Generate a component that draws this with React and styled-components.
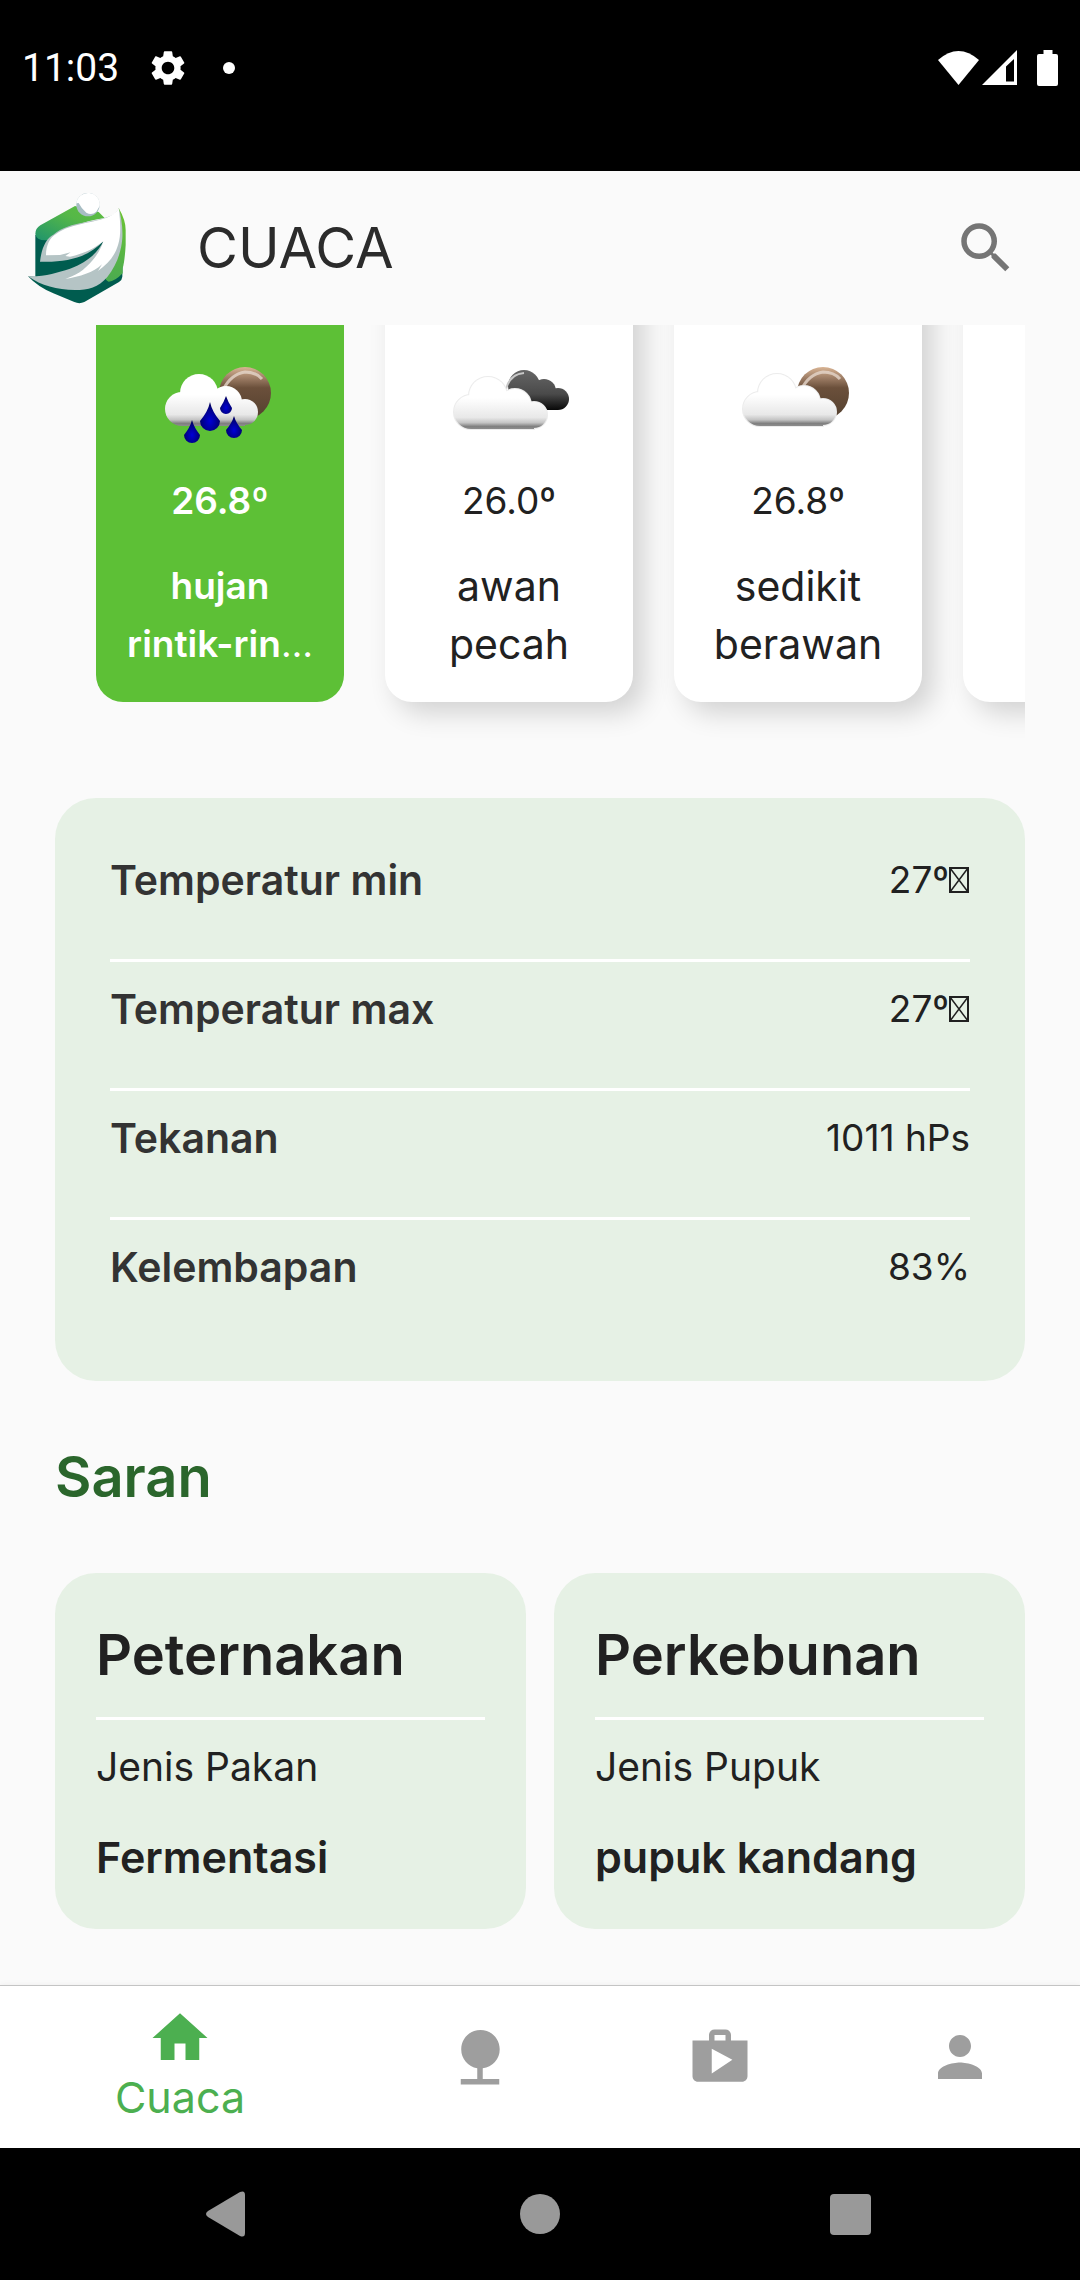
import React from "react";
import styled, { createGlobalStyle } from "styled-components";
import {
  MdHome,
  MdNature,
  MdPerson,
  MdSearch,
  MdSettings,
  MdShop,
} from "react-icons/md";

const GlobalStyle = createGlobalStyle`
  * { box-sizing: border-box; }
  body {
    margin: 0;
    background: #fafafa;
    color: #212121;
    font-family: Inter, "Open Sans", sans-serif;
    font-size: 39px;
    line-height: 58px;
  }
  h1, h2, h3, p, dl, dt, dd, ul { margin: 0; padding: 0; }
  button { border: 0; padding: 0; background: none; font: inherit; color: inherit; cursor: pointer; }
  svg { display: block; flex: none; }
`;

const Page = styled.div`
  min-height: 100vh;
  display: flex;
  flex-direction: column;
`;

/* ---------- status bar ---------- */

const StatusBar = styled.div`
  display: flex;
  align-items: center;
  justify-content: space-between;
  height: 171px;
  padding: 0 22px 36px;
  background: #000;
  color: #fff;
`;

const StatusGroup = styled.div`
  display: flex;
  align-items: center;
  gap: ${(p) => p.$gap}px;
`;

const Clock = styled.time`
  font-family: Roboto, sans-serif;
`;

const Dot = styled.span`
  width: 12px;
  height: 12px;
  margin-left: 6px;
  border-radius: 50%;
  background: #fff;
`;

/* ---------- app bar ---------- */

const AppBar = styled.header`
  display: flex;
  align-items: center;
  height: 154px;
  padding: 0 61px 0 20px;
`;

const AppTitle = styled.h1`
  flex: 1;
  padding-left: 57px;
  font-size: 56px;
  font-weight: 400;
  line-height: 82px;
  color: #2b2b2b;
`;

const SearchButton = styled.button`
  color: #757575;
  font-size: 66px;
`;

/* ---------- content ---------- */

const Content = styled.main`
  flex: 1;
  padding: 0 55px 41px;
`;

const Forecast = styled.section`
  overflow: hidden;
  padding-bottom: 41px;
  margin-bottom: 55px;
`;

const ForecastList = styled.ul`
  display: flex;
  gap: 41px;
  margin-top: -60px;
  padding-left: 41px;
  list-style: none;
`;

const ForecastCard = styled.li`
  flex: none;
  display: flex;
  flex-direction: column;
  align-items: center;
  width: 248px;
  padding: 90px 0 29px;
  border-radius: 27px;
  background: ${(p) => (p.$active ? "#5dc036" : "#fff")};
  color: ${(p) => (p.$active ? "#fff" : "#212121")};
  font-size: ${(p) => (p.$active ? 37 : 41)}px;
  font-weight: ${(p) => (p.$active ? 600 : 400)};
  box-shadow: ${(p) => (p.$active ? "none" : "11px 11px 27px rgba(0, 0, 0, 0.16)")};
  text-align: center;
`;

const Temperature = styled.p`
  margin: 17px 0 27px;
  font-size: 37px;
`;

const Line = styled.span`
  display: block;
  white-space: nowrap;
`;

const Ellipsis = styled.span`
  font-weight: 400;
`;

const Details = styled.dl`
  padding: 35px 55px;
  border-radius: 41px;
  background: #e6f1e5;
`;

const DetailRow = styled.div`
  display: flex;
  align-items: center;
  justify-content: space-between;
  padding: 18px 0 50px;
  border-bottom: 3px solid #fff;

  &:last-child { border-bottom: 0; }
`;

const DetailLabel = styled.dt`
  font-size: 41px;
  font-weight: 600;
  color: #333;
`;

const DetailValue = styled.dd`
  display: flex;
  align-items: center;
  font-size: 37px;
`;

const SectionTitle = styled.h2`
  margin: 55px 0;
  font-size: 56px;
  font-weight: 600;
  line-height: 82px;
  color: #2b662c;
`;

const AdviceGrid = styled.div`
  display: grid;
  grid-template-columns: 1fr 1fr;
  gap: 28px;
`;

const AdviceCard = styled.article`
  padding: 41px;
  border-radius: 41px;
  background: #e6f1e5;
`;

const AdviceTitle = styled.h3`
  padding-bottom: 21px;
  margin-bottom: 18px;
  border-bottom: 3px solid #fff;
  font-size: 56px;
  font-weight: 600;
  line-height: 82px;
`;

const AdviceValue = styled.p`
  margin-top: 30px;
  font-size: 43px;
  font-weight: 600;
  line-height: 62px;
`;

/* ---------- bottom bars ---------- */

const TabBar = styled.nav`
  display: flex;
  height: 163px;
  border-top: 1px solid #c4c4c4;
  background: #fff;
  box-shadow: 0 0 6px rgba(0, 0, 0, 0.06);
`;

const Tab = styled.button`
  flex: ${(p) => (p.$active ? 3 : 2)} 1 0;
  display: flex;
  flex-direction: column;
  align-items: center;
  padding-top: ${(p) => (p.$active ? 19 : 38)}px;
  color: ${(p) => (p.$active ? "#4caf50" : "#9e9e9e")};
  font-size: 43px;
  line-height: 52px;

  svg { font-size: 66px; }
`;

const SystemBar = styled.nav`
  display: flex;
  align-items: center;
  justify-content: center;
  gap: 245px;
  height: 132px;
  background: #000;
`;

/* ---------- drawings ---------- */

const Logo = () => (
  <svg width="120" height="136" viewBox="0 0 360 408" role="img" aria-label="Logo">
    <defs>
      <linearGradient id="logo-top" x1="0" y1="1" x2="1" y2="0">
        <stop offset="0" stopColor="#1f946c" />
        <stop offset="0.6" stopColor="#55b748" />
        <stop offset="1" stopColor="#5fbe40" />
      </linearGradient>
      <linearGradient id="logo-side" x1="0" y1="1" x2="0" y2="0">
        <stop offset="0" stopColor="#4bab50" />
        <stop offset="1" stopColor="#6cc531" />
      </linearGradient>
    </defs>
    <path fill="#005c4f" d="M46 165 L150 150 L250 184 L308 230 L307 290 Q306 301 297 306 L193 366 Q178 373 163 366 L100 340 Q55 322 24 289 L46 290 Z" />
    <path fill="url(#logo-top)" d="M46 162 Q46 145 61 136 L165 78 L236 96 L254 114 Q150 130 95 179 Q50 187 46 162 Z" />
    <path fill="url(#logo-side)" d="M296 84 Q317 120 317 150 L317 195 Q314 245 308 265 L308 280 Q285 304 266 305 Q252 298 257 285 Z" />
    <path fill="#b5c4c5" d="M297 85 C303 112 309 140 307 175 C304 215 290 255 262 291 C235 323 205 330 165 330 C110 329 65 318 24 289 C80 290 110 278 150 266 C200 248 235 217 250 184 C205 232 140 248 60 245 C65 200 80 175 100 164 C150 120 235 130 285 101 Z" />
    <path fill="#fff" d="M296 84 C303 135 302 170 295 192 C285 228 265 250 234 273 L246 253 C220 278 180 290 136 297 L156 289 C200 271 240 220 250 184 C225 205 190 222 150 230 L136 228 L152 217 L120 225 L78 226 C78 195 90 172 108 162 C155 128 240 128 275 106 Q290 98 296 84 Z" />
    <circle cx="204" cy="74" r="35" fill="#a7bdc3" />
    <path fill="#fff" d="M169 70 A35 35 0 1 1 239 78 L229 95 Q215 107 199 98 Q185 87 176 69 Z" />
  </svg>
);

const CLOUD = [
  [31, 54, 17],
  [48, 38, 19],
  [75, 47, 16],
  [94, 57, 13],
];

const FAR_CLOUD = [
  [84, 31, 16],
  [104, 36, 12],
  [118, 44, 11],
];

const CloudShape = ({ circles, base, fill, ...rest }) => {
  const first = circles[0];
  const last = circles[circles.length - 1];
  return (
    <g fill={fill} {...rest}>
      {circles.map(([x, y, r]) => (
        <circle key={x} cx={x} cy={y} r={r} />
      ))}
      <rect x={first[0]} y={base - 18} width={last[0] - first[0]} height={18} />
    </g>
  );
};

const Drop = ({ x, top, bottom, r }) => {
  const cy = bottom - r;
  return (
    <path
      fill="url(#drop)"
      d={`M${x} ${top} Q${x + 2} ${(top + cy) / 2} ${x + r} ${cy} A${r} ${r} 0 0 1 ${x - r} ${cy} Q${x - 2} ${(top + cy) / 2} ${x} ${top} Z`}
    />
  );
};

const WeatherDefs = () => (
  <svg width="0" height="0" aria-hidden="true">
    <defs>
      <linearGradient id="cloud" gradientUnits="userSpaceOnUse" x1="0" y1="19" x2="0" y2="71">
        <stop offset="0.4" stopColor="#fff" />
        <stop offset="0.78" stopColor="#e8e8e8" />
        <stop offset="0.88" stopColor="#c4c4c4" />
        <stop offset="0.95" stopColor="#808080" />
        <stop offset="1" stopColor="#8c8c8c" />
      </linearGradient>
      <linearGradient id="far-cloud" gradientUnits="userSpaceOnUse" x1="0" y1="15" x2="0" y2="55">
        <stop offset="0" stopColor="#666" />
        <stop offset="0.6" stopColor="#4a4a4a" />
        <stop offset="1" stopColor="#080808" />
      </linearGradient>
      <linearGradient id="moon" x1="0" y1="0" x2="0" y2="1">
        <stop offset="0" stopColor="#d9b494" />
        <stop offset="0.2" stopColor="#a08068" />
        <stop offset="0.4" stopColor="#6b503b" />
        <stop offset="1" stopColor="#54402f" />
      </linearGradient>
      <radialGradient id="drop" cx="0.5" cy="0.65" r="0.6">
        <stop offset="0" stopColor="#0000d8" />
        <stop offset="1" stopColor="#00005c" />
      </radialGradient>
    </defs>
  </svg>
);

const WeatherIcon = ({ kind }) => {
  const broken = kind === "broken";
  return (
    <svg width="138" height="100" viewBox="0 0 138 100" aria-hidden="true">
      {broken ? (
        <>
          <CloudShape circles={FAR_CLOUD} base={55} fill="url(#far-cloud)" />
          <path d="M66 34 Q70 19 84 18" fill="none" stroke="#c8c8c8" strokeWidth="2" />
        </>
      ) : (
        <>
          <circle cx="94" cy="38" r="26" fill="url(#moon)" />
          <path d="M72 35 Q80 19 94 17 Q105 17 111 24" fill="none" stroke="#e5d6ca" strokeWidth="3" opacity="0.8" />
        </>
      )}
      <g transform={broken ? "translate(0 3)" : undefined}>
        {kind !== "rain" && (
          <CloudShape circles={CLOUD} base={71} fill="none" stroke="#ececec" strokeWidth="2" />
        )}
        <CloudShape circles={CLOUD} base={71} fill="url(#cloud)" />
      </g>
      {kind === "rain" && (
        <>
          <Drop x={59} top={47} bottom={76} r={10} />
          <Drop x={75} top={41} bottom={59} r={6} />
          <Drop x={83} top={61} bottom={83} r={8} />
          <Drop x={41} top={65} bottom={88} r={8} />
        </>
      )}
    </svg>
  );
};

const MissingSymbol = () => (
  <svg width="21" height="28" viewBox="0 0 21 28" fill="none" stroke="#212121" aria-hidden="true">
    <rect x="1" y="2" width="18" height="24" strokeWidth="2" />
    <path d="M1 2 L19 26 M19 2 L1 26" strokeWidth="1.5" />
  </svg>
);

const WifiIcon = () => (
  <svg width="41" height="34" viewBox="0 0 41 34" fill="#fff" aria-hidden="true">
    <path d="M0 9 Q20.500 -9 41 9 L20.500 34 Z" />
  </svg>
);

const SignalIcon = () => (
  <svg width="35" height="35" viewBox="0 0 35 35" aria-hidden="true">
    <path fill="#fff" fillRule="evenodd" d="M35 0 V35 H0 Z M32 9 L24 16.500 V31.500 H32 Z" />
  </svg>
);

const BatteryIcon = () => (
  <svg width="21" height="36" viewBox="0 0 21 36" fill="#fff" aria-hidden="true">
    <path d="M6.500 0 H15.500 V4 H19 Q21 4 21 6 V34 Q21 36 19 36 H2 Q0 36 0 34 V6 Q0 4 2 4 H6.500 Z" />
  </svg>
);

const SystemIcon = ({ children }) => (
  <svg width="66" height="66" viewBox="0 0 66 66" fill="#999" aria-hidden="true">
    {children}
  </svg>
);

/* ---------- data ---------- */

const forecast = [
  { kind: "rain", temp: "26.8º", lines: ["hujan", "rintik-rin"], cut: true, active: true },
  { kind: "broken", temp: "26.0º", lines: ["awan", "pecah"] },
  { kind: "few", temp: "26.8º", lines: ["sedikit", "berawan"] },
  { lines: [] },
];

const details = [
  { label: "Temperatur min", value: "27º", missing: true },
  { label: "Temperatur max", value: "27º", missing: true },
  { label: "Tekanan", value: "1011 hPs" },
  { label: "Kelembapan", value: "83%" },
];

const advice = [
  { title: "Peternakan", label: "Jenis Pakan", value: "Fermentasi" },
  { title: "Perkebunan", label: "Jenis Pupuk", value: "pupuk kandang" },
];

const tabs = [
  { name: "Cuaca", Icon: MdHome, active: true },
  { name: "Kebun", Icon: MdNature },
  { name: "Toko", Icon: MdShop },
  { name: "Profil", Icon: MdPerson },
];

export default function App() {
  return (
    <Page>
      <GlobalStyle />
      <WeatherDefs />
      <StatusBar>
        <StatusGroup $gap={28}>
          <Clock>11:03</Clock>
          <MdSettings size={42} />
          <Dot />
        </StatusGroup>
        <StatusGroup $gap={20}>
          <StatusGroup $gap={3}>
            <WifiIcon />
            <SignalIcon />
          </StatusGroup>
          <BatteryIcon />
        </StatusGroup>
      </StatusBar>

      <AppBar>
        <Logo />
        <AppTitle>CUACA</AppTitle>
        <SearchButton type="button" aria-label="Cari">
          <MdSearch />
        </SearchButton>
      </AppBar>

      <Content>
        <Forecast>
          <ForecastList>
            {forecast.map((item, i) => (
              <ForecastCard key={i} $active={item.active}>
                {item.kind && <WeatherIcon kind={item.kind} />}
                {item.temp && <Temperature>{item.temp}</Temperature>}
                <p>
                  {item.lines.map((line, n) => (
                    <Line key={line}>
                      {line}
                      {item.cut && n === 1 && <Ellipsis>…</Ellipsis>}
                    </Line>
                  ))}
                </p>
              </ForecastCard>
            ))}
          </ForecastList>
        </Forecast>

        <Details>
          {details.map((d) => (
            <DetailRow key={d.label}>
              <DetailLabel>{d.label}</DetailLabel>
              <DetailValue>
                {d.value}
                {d.missing && <MissingSymbol />}
              </DetailValue>
            </DetailRow>
          ))}
        </Details>

        <SectionTitle>Saran</SectionTitle>
        <AdviceGrid>
          {advice.map((a) => (
            <AdviceCard key={a.title}>
              <AdviceTitle>{a.title}</AdviceTitle>
              <p>{a.label}</p>
              <AdviceValue>{a.value}</AdviceValue>
            </AdviceCard>
          ))}
        </AdviceGrid>
      </Content>

      <TabBar>
        {tabs.map(({ name, Icon, active }) => (
          <Tab key={name} type="button" $active={active} aria-label={name}>
            <Icon />
            {active && name}
          </Tab>
        ))}
      </TabBar>

      <SystemBar>
        <button type="button" aria-label="Kembali">
          <SystemIcon>
            <path d="M12 30 L44 11 Q49 9 49 14 V52 Q49 57 44 55 L12 36 Q8 33 12 30 Z" />
          </SystemIcon>
        </button>
        <button type="button" aria-label="Beranda">
          <SystemIcon>
            <circle cx="33" cy="33" r="20" />
          </SystemIcon>
        </button>
        <button type="button" aria-label="Aplikasi terbaru">
          <SystemIcon>
            <rect x="12" y="13" width="41" height="41" rx="4" />
          </SystemIcon>
        </button>
      </SystemBar>
    </Page>
  );
}
